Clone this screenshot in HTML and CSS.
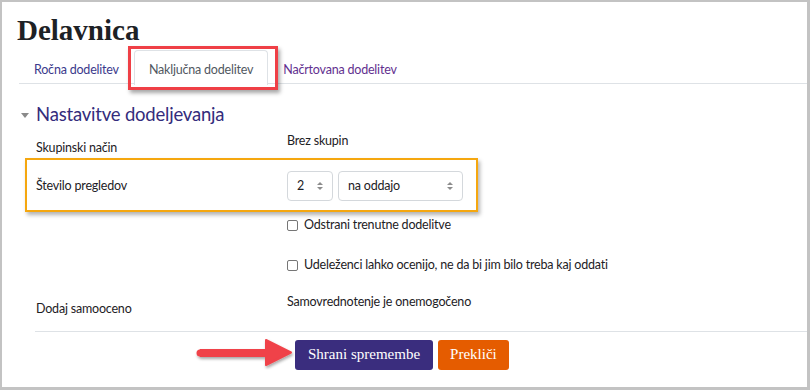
FILE: index.html
```html
<!DOCTYPE html>
<html lang="sl">
<head>
	<meta charset="UTF-8">
	<title>Delavnica</title>
<link rel="stylesheet" href="styles.css">
</head>
<body>
	<div class="frame">
		<h1 class="title">Delavnica</h1>

		<ul class="tabs">
			<li><a href="javascript:;" class="tab">Ročna dodelitev</a></li>
			<li><a href="javascript:;" class="tab active">Naključna dodelitev</a></li>
			<li><a href="javascript:;" class="tab visited">Načrtovana dodelitev</a></li>
		</ul>

		<div class="section">
			<h2 class="legend"><span class="caret"></span>Nastavitve dodeljevanja</h2>

			<div class="row row-1">
				<div class="label pad">Skupinski način</div>
				<div class="value">Brez skupin</div>
			</div>

			<div class="row row-2">
				<div class="label">Število pregledov</div>
				<div class="value controls">
					<span class="select small">2<i class="updown"></i></span>
					<span class="select wide">na oddajo<i class="updown"></i></span>
				</div>
			</div>

			<div class="row row-3">
				<div class="label"></div>
				<label class="value check"><span class="box"></span>Odstrani trenutne dodelitve</label>
			</div>

			<div class="row row-4">
				<div class="label"></div>
				<label class="value check"><span class="box"></span>Udeleženci lahko ocenijo, ne da bi jim bilo treba kaj oddati</label>
			</div>

			<div class="row row-5">
				<div class="label pad">Dodaj samooceno</div>
				<div class="value">Samovrednotenje je onemogočeno</div>
			</div>
		</div>

		<div class="actions">
			<a href="javascript:;" class="btn save">Shrani spremembe</a>
			<a href="javascript:;" class="btn cancel">Prekliči</a>
		</div>

		<!-- oznake na sliki -->
		<div class="mark mark-tab"></div>
		<div class="mark mark-row"></div>
		<svg class="arrow" width="104" height="34" viewBox="0 0 104 34">
			<defs>
				<filter id="sh" x="-10%" y="-30%" width="130%" height="180%">
					<feDropShadow dx="1" dy="2" stdDeviation="1.5" flood-color="#000" flood-opacity="0.35"/>
				</filter>
			</defs>
			<g filter="url(#sh)">
				<path d="M6 13.5 L76 13.5 L76 20.5 L6 20.5 Z" fill="#f0424a" stroke="#f0424a" stroke-width="1" stroke-linejoin="round"/>
				<circle cx="6" cy="17" r="3.5" fill="#f0424a"/>
				<path d="M72 4 L97 16.5 L72 29 Z" fill="#f0424a" stroke="#f0424a" stroke-width="2" stroke-linejoin="round"/>
			</g>
		</svg>
	</div>
</body>
</html>
```

FILE: styles.css
```css
html,body,div,ul,li,h1,h2,a,span,label{margin:0;padding:0;border:0;}
li{list-style:none;}
a{text-decoration:none;}
body{background:#fff;font-family:Lato,"Open Sans",sans-serif;font-size:12.5px;letter-spacing:-0.2px;color:#1d2125;}

.frame{position:relative;width:810px;height:390px;box-sizing:border-box;border-style:solid;border-color:#c3c3c3;border-width:2px 3px 3px 2px;overflow:hidden;}

.title{margin:12px 0 0 15px;font-family:"Liberation Serif",serif;font-weight:bold;font-size:29px;line-height:33px;letter-spacing:0;color:#1d2125;}

.tabs{display:flex;margin:3px 0 0 17px;height:33px;border-bottom:1px solid #dee2e6;}
.tab{display:block;height:32px;line-height:37px;padding:0 14px;border:1px solid transparent;border-bottom:0;border-radius:4px 4px 0 0;color:#3b3a8c;}
.tab.active{color:#51585f;border-color:#dee2e6;background:#fff;height:34px;}
.tab.visited{color:#62308f;}

.section{padding:0 0 0 34px;}
.legend{position:relative;margin:18px 0 5px 0;font-weight:normal;font-size:18.5px;line-height:24px;letter-spacing:-0.2px;color:#342c7c;}
.caret{position:absolute;left:-15px;top:11px;width:0;height:0;border-left:4px solid transparent;border-right:4px solid transparent;border-top:5px solid #8a8a8a;}

.row{display:grid;grid-template-columns:251px 1fr;line-height:20px;}
.label.pad{padding-top:7px;}
.row-1{margin-bottom:13px;}
.row-2{margin-bottom:14px;align-items:center;}
.row-3{margin-bottom:20px;}
.row-4{margin-bottom:17px;}
.row-5{padding-bottom:12px;}

.controls{display:flex;gap:5px;}
.select{position:relative;display:block;height:28px;line-height:28px;border:1px solid #d4d8dc;border-radius:4px;padding-left:9px;box-sizing:content-box;}
.select.small{width:35px;}
.select.wide{width:114px;}
.updown{position:absolute;right:9px;top:10px;width:0;height:0;border-left:3px solid transparent;border-right:3px solid transparent;border-bottom:3px solid #8c8c8c;}
.updown:after{content:"";position:absolute;left:-3px;top:5px;width:0;height:0;border-left:3px solid transparent;border-right:3px solid transparent;border-top:3px solid #8c8c8c;}

.check{display:flex;align-items:center;}
.box{display:block;width:9px;height:9px;border:1px solid #767676;border-radius:2px;margin:0 6px 0 0;}

.actions{display:flex;gap:5px;margin-left:33px;padding:8px 0 0 260px;border-top:1px solid #dee2e6;}
.btn{display:block;height:30px;line-height:29px;padding:0 13px;border-radius:3px;font-family:"Liberation Serif",serif;font-size:15px;letter-spacing:0;color:#fff;}
.btn.save{background:#3a2d7e;padding:0 13px;}
.btn.cancel{background:#e55c00;padding:0 12px;}

.mark{position:absolute;box-sizing:border-box;}
.mark-tab{left:126px;top:44px;width:150px;height:44px;border:3px solid #ef3f46;box-shadow:2px 3px 4px rgba(0,0,0,0.35);}
.mark-row{left:23px;top:156px;width:453px;height:54px;border:2px solid #f5a70f;box-shadow:2px 3px 4px rgba(0,0,0,0.3);}
.arrow{position:absolute;left:192px;top:334px;}
```
